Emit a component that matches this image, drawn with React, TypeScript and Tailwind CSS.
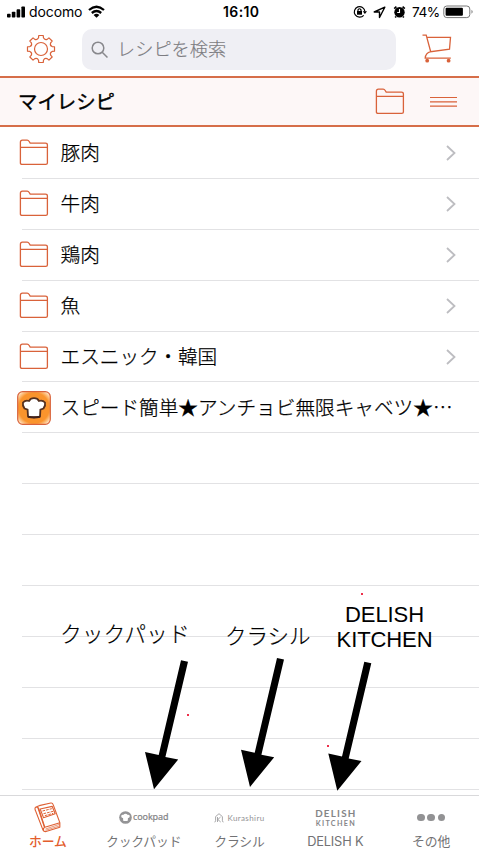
import React from "react";

const ORANGE = "#d9623a";

function FolderIcon() {
  return (
    <svg width="30" height="28" viewBox="0 0 30 28" fill="none" stroke={ORANGE} strokeWidth="1.3" strokeLinejoin="round">
      <path d="M1.4 24V3.2Q1.4 1.2 3.4 1.2H8.2Q9.4 1.2 10.2 2.5L11.2 4.1H26.4Q28.4 4.1 28.4 5.9V24Q28.4 25.4 26.8 25.4H3Q1.4 25.4 1.4 24ZM1.4 8.3H28.4" />
    </svg>
  );
}

function GearIcon() {
  const teeth = Array.from({ length: 8 }, (_, i) => {
    const p = (r: number, d: number) => {
      const a = ((i * 45 + d - 90) * Math.PI) / 180;
      return `${(15 + r * Math.cos(a)).toFixed(2)} ${(15 + r * Math.sin(a)).toFixed(2)}`;
    };
    return `${p(11.4, -12.5)} L${p(13.7, -9.5)} L${p(13.7, 9.5)} L${p(11.4, 12.5)} Q${p(9.4, 22.5)} ${p(11.4, 32.5)}`;
  });
  return (
    <svg width="30" height="30" viewBox="0 0 30 30" fill="none" stroke={ORANGE} strokeWidth="1.2" strokeLinejoin="round">
      <path d={`M${teeth.join(" L")}Z`} />
      <circle cx="15" cy="15" r="6.5" />
    </svg>
  );
}

function CartIcon() {
  return (
    <svg width="30" height="30" viewBox="0 0 30 30" fill="none" stroke={ORANGE} strokeWidth="1.3">
      <path d="M.5 1.2H4.2L8.7 17.7 27.5 15.2 28.5 3.4H4.9M8.7 17.7Q3.6 19 3.2 24.2H28.8" />
      <circle cx="5.2" cy="26.7" r="1.9" fill={ORANGE} stroke="none" />
      <circle cx="26.6" cy="26.7" r="1.9" fill={ORANGE} stroke="none" />
    </svg>
  );
}

function HatShape({ fill, stroke }: { fill: string; stroke?: string }) {
  return (
    <path
      d="M11 25.5 10.6 18.6 7.6 17.6Q5.2 14.5 6 11.5 8.5 8.8 12 10 13.5 7.2 17 7.2T22 10Q25.5 8.8 28 11.5 28.8 14.5 26.4 17.6L23.4 18.6 23 25.5Q17 27 11 25.5Z"
      fill={fill}
      stroke={stroke}
      strokeWidth="1.8"
    />
  );
}

function CookpadAppIcon() {
  return (
    <svg width="34" height="34" viewBox="0 0 34 34">
      <defs>
        <radialGradient id="glow" cx=".5" cy=".5" r=".7">
          <stop offset=".67" stopColor="#fa942d" />
          <stop offset=".9" stopColor="#ffe6c6" />
        </radialGradient>
      </defs>
      <rect x=".7" y=".7" width="32.6" height="32.6" rx="5" fill="url(#glow)" stroke={ORANGE} strokeWidth="1.2" />
      <HatShape fill="#fff" stroke="#54301f" />
      <path d="M11 25.7Q17 27.1 23 25.7" fill="none" stroke="#40211c" strokeWidth="2" />
    </svg>
  );
}

function StatusBar() {
  return (
    <div className="relative flex h-6 shrink-0 items-center justify-between pl-[6px] pr-[5px]">
      <div className="flex items-center">
        <svg width="20" height="12" viewBox="0 0 20 12">
          <rect x="1" y="7.8" width="3.6" height="3.8" rx=".8" />
          <rect x="5.8" y="5.7" width="3.6" height="5.9" rx=".8" />
          <rect x="10.6" y="3.2" width="3.6" height="8.4" rx=".8" />
          <rect x="15.4" y=".5" width="3.6" height="11.1" rx=".8" />
        </svg>
        <span className="ml-[3px] w-[59px] text-[14px] leading-6 tracking-[-0.1px]">docomo</span>
        <svg className="-mt-px" width="17" height="13" viewBox="0 0 17 13" fill="none" stroke="#000" strokeWidth="2.3">
          <path d="M1 5Q8.5-1.5 16 5M3.8 8Q8.5 4 13.2 8" />
          <path d="M5.6 9.9Q8.5 7.6 11.4 9.9L8.5 12.7Z" fill="#000" stroke="none" />
        </svg>
      </div>
      <span className="absolute left-[223px] top-0 text-[14px] font-semibold leading-6 tracking-[0.4px]">16:10</span>
      <div className="flex items-center">
        <svg width="14" height="14" viewBox="0 0 14 14" fill="none" stroke="#000" strokeWidth="1.2">
          <path d="M10.7 10.3A5.3 5.3 0 1 1 11.9 6.5" />
          <path d="M9.7 6.3H14L11.9 9Z" fill="#000" stroke="none" />
          <rect x="4" y="6" width="5" height="3.7" fill="#000" stroke="none" />
          <path d="M5 6V4.8Q6.5 2.7 8 4.8V6" />
        </svg>
        <svg className="ml-[6px]" width="13" height="13" viewBox="0 0 13 13" fill="none" stroke="#000" strokeWidth="1.4" strokeLinejoin="round">
          <path d="M11.8 1.2 1.2 6H6.5V11.5Z" />
        </svg>
        <svg className="ml-[7px]" width="13" height="14" viewBox="0 0 13 14">
          <circle cx="6.5" cy="7.3" r="5.2" />
          <path d="M1.2 3.6 3.4 1.7M11.8 3.6 9.6 1.7M3 11.5 2.2 12.5M10 11.5 10.8 12.5" stroke="#000" strokeWidth="1.7" />
          <path d="M6.5 4V7.5H4.2" fill="none" stroke="#fff" strokeWidth="1.1" />
        </svg>
        <span className="ml-[6px] w-[31px] whitespace-nowrap text-[13.7px] leading-6 tracking-[-0.55px]">74%</span>
        <svg width="31" height="14" viewBox="0 0 31 14">
          <rect x=".8" y="1" width="26" height="11.6" rx="3" fill="none" stroke="#777" />
          <rect x="2.6" y="2.8" width="17.3" height="8" rx="1" />
          <path d="M28.5 4.8Q30.8 6.8 28.5 8.8Z" fill="#777" />
        </svg>
      </div>
    </div>
  );
}

function ListRow({ title, app }: { title?: string; app?: boolean }) {
  return (
    <div className="relative flex h-[50.95px] shrink-0 items-center">
      {title && (
        <>
          <div className="flex w-[60.5px] items-center">
            {app ? <div className="ml-[17px]"><CookpadAppIcon /></div> : <div className="ml-[19px]"><FolderIcon /></div>}
          </div>
          <span className="-mt-[3px] whitespace-nowrap font-['Noto_Sans_CJK_JP',sans-serif] text-[19.65px] font-light leading-[29px] [-webkit-text-stroke:0.25px_black]">{title}</span>
          {!app && (
            <svg className="-mt-px ml-auto mr-[22px]" width="12" height="16" viewBox="0 0 12 16" fill="none" stroke="#bdbdc1" strokeWidth="1.8">
              <path d="M2 1 9.5 8 2 15" />
            </svg>
          )}
        </>
      )}
      <div className="absolute bottom-0 left-[22px] right-0 h-px bg-[#e2e2e4]" />
    </div>
  );
}

function BookIcon() {
  return (
    <svg width="27" height="31" viewBox="0 0 80 93" fill="none" stroke="#de6034" strokeWidth="3.4" strokeLinejoin="round">
      <path d="M15 11 50 3Q55 2 57 8L77 62 32 76 14 21Q11 13 4 16 1 19 4 26L26 83Q30 91 38 88L77 76V62M4 16 15 11" />
      <path d="M32 76Q26 79 28 86M11 17 31 76" />
      <path d="M18 21 54 13 63 35 28 47Z" />
      <path d="M25 27 53 20M28 35 57 28M32 41 57 34" strokeWidth="3" strokeDasharray="8 3" />
      <path d="M34 81 76 67M34 85 76 72" strokeWidth="2" />
    </svg>
  );
}

function CookpadLogo() {
  return (
    <div className="flex items-center text-[#858587]">
      <svg width="13" height="13" viewBox="0 0 34 34">
        <circle cx="17" cy="17" r="16.5" fill="#949496" />
        <HatShape fill="#fff" />
      </svg>
      <span className="-mt-[2px] ml-px font-['Noto_Sans'] text-[9px] leading-none tracking-[-0.1px] [-webkit-text-stroke:0.2px_#858587]">cookpad</span>
    </div>
  );
}

function KurashiruLogo() {
  return (
    <div className="flex items-center text-[#929294]">
      <svg width="10" height="10" viewBox="0 0 10 10" fill="none" stroke="currentColor" strokeWidth=".8">
        <path d="M.5 9Q1.6 9 1.6 7.7V3.6L5 .7 8.4 3.6V7.7Q8.4 9 9.5 9M3.5 4V9M6.6 4 3.8 6.5 6.7 9" />
      </svg>
      <span className="ml-[3px] mt-px font-[Lato] text-[8px] leading-none tracking-[0.4px]">Kurashiru</span>
    </div>
  );
}

function DelishLogo() {
  return (
    <div className="-mt-px flex flex-col items-center whitespace-nowrap font-[Lato] text-[#858587]">
      <span className="mr-[-1.2px] text-[9.8px] font-bold leading-[12px] tracking-[1.25px]">DELISH</span>
      <span className="mr-[-1.2px] text-[7.2px] font-bold leading-[9px] tracking-[1.3px]">KITCHEN</span>
    </div>
  );
}

function MoreDots() {
  return (
    <div className="flex gap-[2.7px]">
      <i className="size-[7.8px] rounded-full bg-[#929294]" />
      <i className="size-[7.8px] rounded-full bg-[#929294]" />
      <i className="size-[7.8px] rounded-full bg-[#929294]" />
    </div>
  );
}

function Tab({ label, active, children }: { label: string; active?: boolean; children: React.ReactNode }) {
  return (
    <div className={`flex min-w-0 flex-1 flex-col items-center pt-[5px] ${active ? "font-medium text-[#e35e2d]" : "text-[#727274]"}`}>
      <div className="flex h-[33px] items-center">{children}</div>
      <span className="whitespace-nowrap text-[12.8px] leading-[16px] tracking-[-0.15px]">{label}</span>
    </div>
  );
}

function Arrow({ x, y }: { x: number; y: number }) {
  return (
    <path transform={`translate(${x} ${y})`} d="M181 660.2 188 661.8 165.4 757 178.2 759.5 154 789.2 145 752 158.7 755Z" />
  );
}

const rows = ["豚肉", "牛肉", "鶏肉", "魚", "エスニック・韓国"];

export default function App() {
  return (
    <div className="relative flex h-[852px] w-[479px] flex-col overflow-hidden bg-white font-[Inter,'Noto_Sans_CJK_JP',sans-serif] text-black">
      <StatusBar />
      <div className="flex h-[52px] shrink-0 items-start">
        <div className="ml-[26px] mt-[10px]"><GearIcon /></div>
        <div className="ml-[26px] mt-[5px] flex h-[41px] w-[314px] items-center rounded-[10px] bg-[#efeff4]">
          <svg className="ml-[9px]" width="18" height="18" viewBox="0 0 18 18" fill="none" stroke="#88888c" strokeWidth="1.5">
            <circle cx="7" cy="7" r="5.8" />
            <path d="M11.2 11.2 16.5 16.5" />
          </svg>
          <span className="-mt-[2px] ml-[8px] text-[18.2px] font-light leading-[28px] text-[#7c7c81] [-webkit-text-stroke:0.15px_#7c7c81]">レシピを検索</span>
        </div>
        <div className="ml-[26px] mt-[10px]"><CartIcon /></div>
      </div>
      <div className="flex h-[51px] shrink-0 items-center border-y-2 border-[#d66e49] bg-[#fdf7f7]">
        <h1 className="ml-[18px] mt-[2px] text-[19.4px] leading-[29px] [-webkit-text-stroke:0.4px_black]">マイレシピ</h1>
        <div className="ml-auto mr-[25px]"><FolderIcon /></div>
        <svg className="mr-[22px]" width="27" height="12" viewBox="0 0 27 12" stroke={ORANGE} strokeWidth="1.2">
          <path d="M0 1.5H27M0 5.8H27M0 10.1H27" />
        </svg>
      </div>
      <main className="flex h-[668px] shrink-0 flex-col pt-[0.8px]">
        {rows.map((title) => <ListRow key={title} title={title} />)}
        <ListRow title="スピード簡単★アンチョビ無限キャベツ★…" app />
        {Array.from({ length: 7 }, (_, i) => <ListRow key={i} />)}
      </main>
      <nav className="flex h-[57px] shrink-0 border-t border-[#d9d9db]">
        <Tab label="ホーム" active><BookIcon /></Tab>
        <Tab label="クックパッド"><CookpadLogo /></Tab>
        <Tab label="クラシル"><KurashiruLogo /></Tab>
        <Tab label="DELISH K"><DelishLogo /></Tab>
        <Tab label="その他"><MoreDots /></Tab>
      </nav>
      <span className="absolute left-[60px] top-[618px] whitespace-nowrap text-[21.8px] font-light leading-[32px] [-webkit-text-stroke:0.2px_black]">クックパッド</span>
      <span className="absolute left-[225px] top-[620px] whitespace-nowrap text-[21.5px] font-light leading-[32px] [-webkit-text-stroke:0.2px_black]">クラシル</span>
      <div className="absolute left-[334px] top-[602px] w-[101px] text-center font-['Liberation_Sans',sans-serif] text-[22px] leading-[25px] tracking-[-0.1px]">
        DELISH<br />KITCHEN
      </div>
      <svg className="absolute left-0 top-0" width="479" height="852" viewBox="0 0 479 852">
        <Arrow x={0} y={0} />
        <Arrow x={96} y={-2.3} />
        <Arrow x={183.3} y={1.5} />
        <g fill="#ed304b">
          <rect x="361" y="593" width="2" height="2" />
          <rect x="187" y="714" width="2" height="2" />
          <rect x="327" y="745" width="2" height="2" />
        </g>
      </svg>
    </div>
  );
}
